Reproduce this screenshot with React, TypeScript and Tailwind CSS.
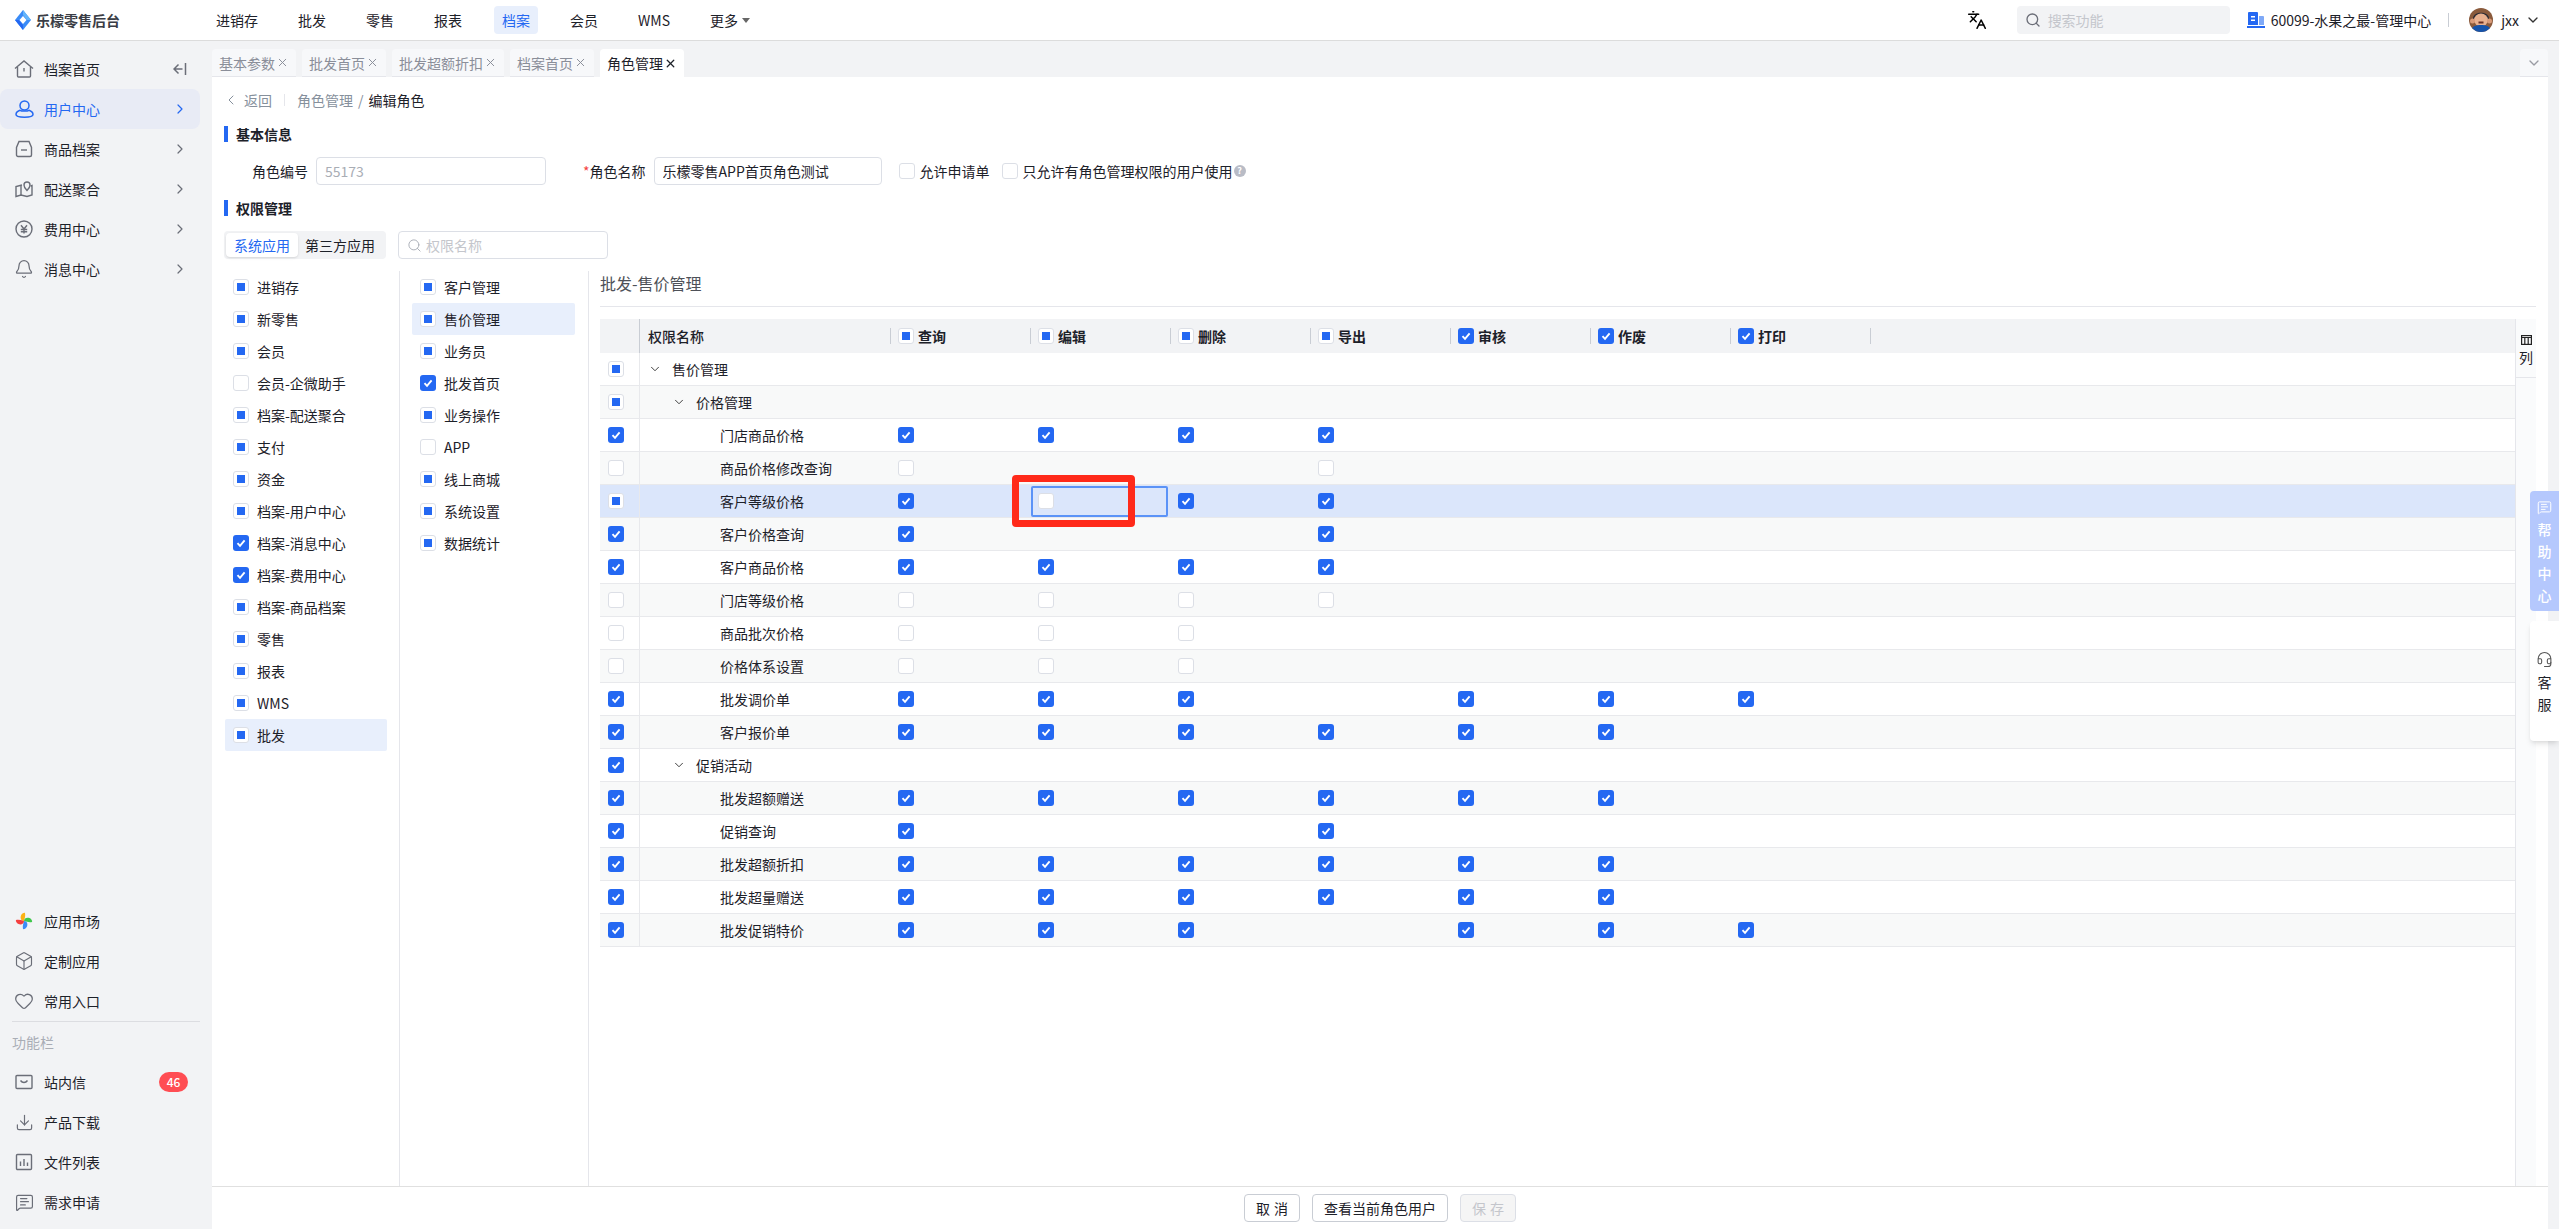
import { Bell, Box, ChevronDown, ChevronLeft, ChevronRight, Download, Heart, Headset, Languages, MessageSquareText, Search, X } from 'lucide-react';
import type { ReactNode } from 'react';

type Mark = 'c' | 'u' | 'i' | 'n' | 'f';

const navItems = ['进销存', '批发', '零售', '报表', '档案', '会员', 'WMS'];
const tabs = ['基本参数', '批发首页', '批发超额折扣', '档案首页', '角色管理'];

const appList: [string, Mark][] = [
  ['进销存', 'i'],
  ['新零售', 'i'],
  ['会员', 'i'],
  ['会员-企微助手', 'u'],
  ['档案-配送聚合', 'i'],
  ['支付', 'i'],
  ['资金', 'i'],
  ['档案-用户中心', 'i'],
  ['档案-消息中心', 'c'],
  ['档案-费用中心', 'c'],
  ['档案-商品档案', 'i'],
  ['零售', 'i'],
  ['报表', 'i'],
  ['WMS', 'i'],
  ['批发', 'i'],
];

const moduleList: [string, Mark][] = [
  ['客户管理', 'i'],
  ['售价管理', 'i'],
  ['业务员', 'i'],
  ['批发首页', 'c'],
  ['业务操作', 'i'],
  ['APP', 'u'],
  ['线上商城', 'i'],
  ['系统设置', 'i'],
  ['数据统计', 'i'],
];

const headCols: [string, Mark][] = [
  ['查询', 'i'],
  ['编辑', 'i'],
  ['删除', 'i'],
  ['导出', 'i'],
  ['审核', 'c'],
  ['作废', 'c'],
  ['打印', 'c'],
];

// level 0/1 rows are tree nodes with a chevron, level 2 are leaves
const rows: { name: string; level: number; left: Mark; cells: Mark[] }[] = [
  { name: '售价管理', level: 0, left: 'i', cells: [] },
  { name: '价格管理', level: 1, left: 'i', cells: [] },
  { name: '门店商品价格', level: 2, left: 'c', cells: ['c', 'c', 'c', 'c'] },
  { name: '商品价格修改查询', level: 2, left: 'u', cells: ['u', 'n', 'n', 'u'] },
  { name: '客户等级价格', level: 2, left: 'i', cells: ['c', 'f', 'c', 'c'] },
  { name: '客户价格查询', level: 2, left: 'c', cells: ['c', 'n', 'n', 'c'] },
  { name: '客户商品价格', level: 2, left: 'c', cells: ['c', 'c', 'c', 'c'] },
  { name: '门店等级价格', level: 2, left: 'u', cells: ['u', 'u', 'u', 'u'] },
  { name: '商品批次价格', level: 2, left: 'u', cells: ['u', 'u', 'u', 'n'] },
  { name: '价格体系设置', level: 2, left: 'u', cells: ['u', 'u', 'u', 'n'] },
  { name: '批发调价单', level: 2, left: 'c', cells: ['c', 'c', 'c', 'n', 'c', 'c', 'c'] },
  { name: '客户报价单', level: 2, left: 'c', cells: ['c', 'c', 'c', 'c', 'c', 'c', 'n'] },
  { name: '促销活动', level: 1, left: 'c', cells: [] },
  { name: '批发超额赠送', level: 2, left: 'c', cells: ['c', 'c', 'c', 'c', 'c', 'c', 'n'] },
  { name: '促销查询', level: 2, left: 'c', cells: ['c', 'n', 'n', 'c', 'n', 'n', 'n'] },
  { name: '批发超额折扣', level: 2, left: 'c', cells: ['c', 'c', 'c', 'c', 'c', 'c', 'n'] },
  { name: '批发超量赠送', level: 2, left: 'c', cells: ['c', 'c', 'c', 'c', 'c', 'c', 'n'] },
  { name: '批发促销特价', level: 2, left: 'c', cells: ['c', 'c', 'c', 'n', 'c', 'c', 'c'] },
];

function Check({ mark }: { mark: Mark }) {
  if (mark === 'n') return null;
  if (mark === 'c') {
    return (
      <span className="w-4 h-4 rounded-[3px] bg-[#2468f2] flex items-center justify-center shrink-0">
        <svg width="12" height="12" viewBox="0 0 12 12" fill="none">
          <path d="M2.500 6.200 5 8.800 9.600 3.400" stroke="#fff" strokeWidth="1.900" />
        </svg>
      </span>
    );
  }
  return (
    <span className="w-4 h-4 rounded-[3px] bg-white border border-[#dcdfe6] flex items-center justify-center shrink-0">
      {mark === 'i' && <span className="w-2 h-2 bg-[#2468f2]" />}
    </span>
  );
}

function Logo() {
  return (
    <svg width="16" height="20" viewBox="0 0 16 20">
      <path d="M8 0 16 10 8 20 0 10Z" fill="#3a8bf7" />
      <path d="M8 0 16 10 12 10 8 5Z" fill="#62b4fb" />
      <path d="M8 20 0 10 4 10 8 15Z" fill="#2468f2" />
      <path d="M8 6 11.500 10 8 14 4.500 10Z" fill="#fff" />
    </svg>
  );
}

function HomeIcon() {
  return (
    <svg width="20" height="18" viewBox="0 0 20 18" fill="none" stroke="#6b6e78" strokeWidth="1.400">
      <path d="M1 8.500 10 1l9 7.500" />
      <path d="M3.500 7v9a1 1 0 0 0 1 1h11a1 1 0 0 0 1-1V7" />
      <path d="M10 8v3.500" />
    </svg>
  );
}

function UserIcon() {
  return (
    <svg width="19" height="18" viewBox="0 0 19 18" fill="none" stroke="#2468f2" strokeWidth="1.500">
      <circle cx="9.500" cy="5.500" r="4.500" />
      <path d="M1 14.500c0-2.200 2-3.500 4-4.200 1.500 1 7.500 1 9 0 2 .7 4 2 4 4.200 0 1.800-3.500 2.700-8.500 2.700S1 16.300 1 14.500Z" />
    </svg>
  );
}

function TrayIcon() {
  return (
    <svg width="18" height="18" viewBox="0 0 18 18" fill="none" stroke="#6b6e78" strokeWidth="1.400">
      <path d="M4 1.500h10l2.500 6V15a1.500 1.500 0 0 1-1.500 1.500H3A1.500 1.500 0 0 1 1.500 15V7.500Z" />
      <path d="M6 10h6" />
    </svg>
  );
}

function MapIcon() {
  return (
    <svg width="18" height="18" viewBox="0 0 18 18" fill="none" stroke="#6b6e78" strokeWidth="1.400">
      <path d="M7 5 1 6.500v10L6 15l6 1.500 5-1.500V5.500L15.500 6" />
      <path d="M6 6v9" />
      <path d="M12 10.500s-3-2.800-3-5.500a3 3 0 0 1 6 0c0 2.700-3 5.500-3 5.500Z" />
    </svg>
  );
}

function YuanIcon() {
  return (
    <svg width="18" height="18" viewBox="0 0 18 18" fill="none" stroke="#6b6e78" strokeWidth="1.400">
      <circle cx="9" cy="9" r="8" />
      <path d="M6 5.200 9 9l3-3.800M5.800 9.500h6.400M5.800 11.800h6.400M9 9v4.600" />
    </svg>
  );
}

function MarketIcon() {
  return (
    <svg width="18" height="18" viewBox="0 0 18 18">
      <path d="M9 9C6 9 5 6 6 3.500 6.800 1.500 9 .5 10 1 10.500 3.500 10 6 9 9Z" fill="#fbb214" />
      <path d="M9 9c0-3 3-4 5.500-3C16.500 6.800 17.500 9 17 10 14.500 10.500 12 10 9 9Z" fill="#3fc74b" />
      <path d="M9 9c3 0 4 3 3 5.500-.8 2-3 3-4 2.500C7.500 14.500 8 12 9 9Z" fill="#3c8cf8" />
      <path d="M9 9c0 3-3 4-5.500 3C1.500 11.200.5 9 1 8 3.500 7.500 6 8 9 9Z" fill="#f53f3f" />
    </svg>
  );
}

function MailIcon() {
  return (
    <svg width="18" height="18" viewBox="0 0 18 18" fill="none" stroke="#6b6e78" strokeWidth="1.400">
      <rect x="1" y="2.500" width="16" height="13" rx="1" />
      <path d="M5.500 7.500c1 1.400 2.200 2 3.500 2s2.500-.6 3.500-2" />
    </svg>
  );
}

function ChartIcon() {
  return (
    <svg width="18" height="18" viewBox="0 0 18 18" fill="none" stroke="#6b6e78" strokeWidth="1.400">
      <rect x="1.500" y="1.500" width="15" height="15" rx="1" />
      <path d="M5.500 8.500v4.500M9 6v7M12.500 9.500v3.500" />
    </svg>
  );
}

function OrgIcon() {
  return (
    <svg width="18" height="16" viewBox="0 0 18 16">
      <path d="M1 1a1 1 0 0 1 1-1h8a1 1 0 0 1 1 1v12H1Z" fill="#2468f2" />
      <path d="M12 4h4a1 1 0 0 1 1 1v8h-5Z" fill="#7fa9f7" />
      <rect y="14" width="18" height="2" fill="#2468f2" />
      <path d="M4 4h4v1.500H4ZM4 7.500h4V9H4Z" fill="#fff" />
    </svg>
  );
}

function Avatar() {
  return (
    <svg width="24" height="24" viewBox="0 0 24 24" className="rounded-full shrink-0">
      <rect width="24" height="24" fill="#8a5a3c" />
      <path d="M4 10C5 3 19 3 20 10v2H4Z" fill="#2a2a33" />
      <ellipse cx="12" cy="12" rx="7" ry="6.500" fill="#e8b08f" />
      <circle cx="3.500" cy="13" r="2.500" fill="#d99a78" />
      <circle cx="20.500" cy="13" r="2.500" fill="#d99a78" />
      <path d="M9.500 13.500h5v2h-5Z" fill="#6a2e22" />
      <path d="M2 24c0-6 5-7 10-7s10 1 10 7Z" fill="#1553ab" />
    </svg>
  );
}

function SideItem({ icon, label, open, active, badge }: { icon: ReactNode; label: string; open?: boolean; active?: boolean; badge?: string }) {
  return (
    <div className={active ? 'h-10 w-[200px] rounded-lg bg-[#e8ebf5] flex items-center text-[#2468f2]' : 'h-10 w-[200px] flex items-center'}>
      <span className="w-[24px] ml-3 flex items-center justify-center">{icon}</span>
      <span className="ml-2">{label}</span>
      {open && <ChevronRight size={16} strokeWidth={1.800} className={active ? 'ml-auto mr-3 text-[#2468f2]' : 'ml-auto mr-3 text-[#6b6e78]'} />}
      {badge && <span className="ml-auto mr-3 w-[29px] h-5 rounded-full bg-[#ff4d53] text-white text-xs font-medium flex items-center justify-center">{badge}</span>}
    </div>
  );
}

function SectionTitle({ children, className }: { children: ReactNode; className: string }) {
  return <div className={`h-4 border-l-4 border-[#2468f2] pl-2 flex items-center font-bold ${className}`}>{children}</div>;
}

function ListRow({ label, mark, active, className }: { label: string; mark: Mark; active?: boolean; className: string }) {
  return (
    <div className={`h-8 flex items-center gap-2 pl-2 rounded-[2px] ${className} ${active ? 'bg-[#e8effc]' : ''}`}>
      <Check mark={mark} />
      <span>{label}</span>
    </div>
  );
}

export default function App() {
  return (
    <div className="relative h-[1229px] w-[2559px] overflow-hidden flex flex-col bg-[#f2f3f5] text-[#1d2129] text-sm font-['Noto_Sans_CJK_SC','Noto_Sans',sans-serif]">
      {/* Top bar */}
      <header className="h-[41px] shrink-0 bg-white border-b border-[#dcdcdc] flex items-center">
        <div className="w-[208px] pl-[15px] flex items-center gap-[5px]">
          <Logo />
          <span className="font-bold text-[#3a3d45]">乐檬零售后台</span>
        </div>
        <nav className="flex items-center gap-6">
          {navItems.map((item) => (
            <span key={item} className={item === '档案' ? 'h-7 px-2 flex items-center rounded bg-[#e8effc] text-[#2468f2]' : 'h-7 px-2 flex items-center'}>
              {item}
            </span>
          ))}
          <span className="h-7 px-2 flex items-center gap-1">
            更多
            <span className="w-0 h-0 border-x-[4px] border-x-transparent border-t-[5px] border-t-[#666]" />
          </span>
        </nav>
        <div className="ml-auto flex items-center">
          <Languages size={20} strokeWidth={1.800} className="text-black" />
          <div className="ml-[30px] w-[213px] h-7 rounded bg-[#f2f3f5] flex items-center pl-2 gap-[7px] text-[#c4c6cc]">
            <Search size={16} className="text-[#6b6e78]" />
            搜索功能
          </div>
          <span className="ml-[17px]"><OrgIcon /></span>
          <span className="ml-1.5">60099-水果之最-管理中心</span>
          <span className="ml-[17px] w-px h-3.5 bg-[#c9cdd4]" />
          <span className="ml-[20px]"><Avatar /></span>
          <span className="ml-2">jxx</span>
          <ChevronDown size={16} strokeWidth={2} className="ml-[6px] mr-[18px] text-[#333]" />
        </div>
      </header>

      <div className="flex-1 min-h-0 flex">
        {/* Sidebar */}
        <aside className="w-[212px] shrink-0 flex flex-col pt-2">
          <div className="relative">
            <SideItem icon={<HomeIcon />} label="档案首页" />
            <svg width="14" height="12" viewBox="0 0 14 12" fill="none" stroke="#6b6e78" strokeWidth="1.500" className="absolute left-[173px] top-[14px]">
              <path d="M12.500 0v12M9.500 6H1M5.500 1.500 1 6l4.500 4.500" />
            </svg>
          </div>
          <SideItem active open icon={<UserIcon />} label="用户中心" />
          <SideItem open icon={<TrayIcon />} label="商品档案" />
          <SideItem open icon={<MapIcon />} label="配送聚合" />
          <SideItem open icon={<YuanIcon />} label="费用中心" />
          <SideItem open icon={<Bell size={20} strokeWidth={1.500} className="text-[#6b6e78]" />} label="消息中心" />

          <div className="mt-auto pb-[7px]">
            <SideItem icon={<MarketIcon />} label="应用市场" />
            <SideItem icon={<Box size={20} strokeWidth={1.400} className="text-[#6b6e78]" />} label="定制应用" />
            <SideItem icon={<Heart size={20} strokeWidth={1.500} className="text-[#6b6e78]" />} label="常用入口" />
            <div className="ml-3 w-[188px] h-px bg-[#dcdde1]" />
            <div className="ml-3 h-10 flex items-center text-[#a9adb5]">功能栏</div>
            <SideItem icon={<MailIcon />} label="站内信" badge="46" />
            <SideItem icon={<Download size={19} strokeWidth={1.500} className="text-[#6b6e78]" />} label="产品下载" />
            <SideItem icon={<ChartIcon />} label="文件列表" />
            <SideItem icon={<MessageSquareText size={19} strokeWidth={1.500} className="text-[#6b6e78]" />} label="需求申请" />
          </div>
        </aside>

        <main className="flex-1 min-w-0 flex flex-col">
          {/* Tabs */}
          <div className="h-[36px] shrink-0 pt-2 flex gap-[6px]">
            {tabs.map((tab) => (
              <div
                key={tab}
                className={
                  tab === '角色管理'
                    ? 'h-7 px-[7px] rounded-t flex items-center gap-px bg-white'
                    : 'h-7 px-[7px] rounded-t flex items-center gap-px bg-[#f7f8fa] border-b border-[#e5e6eb] text-[#8a8e99]'
                }
              >
                {tab}
                <X size={13} strokeWidth={tab === '角色管理' ? 2.400 : 1.800} />
              </div>
            ))}
            <div className="ml-auto mr-[11px] w-7 h-7 rounded-t bg-[#f7f8fa] border-b border-[#e5e6eb] flex items-center justify-center text-[#9a9ca3]">
              <ChevronDown size={16} />
            </div>
          </div>

          {/* Page body */}
          <div className="flex-1 min-h-0 mr-[11px] bg-white pl-3 pr-3 flex flex-col">
            <div className="h-[46px] shrink-0 flex items-center text-[#86909c]">
              <ChevronLeft size={16} strokeWidth={1.500} className="ml-[-1px]" />
              <span className="ml-[5px]">返回</span>
              <span className="ml-3 w-px h-3 bg-[#e5e6eb]" />
              <span className="ml-3">角色管理</span>
              <span className="mx-[5px]">/</span>
              <span className="text-[#1d2129]">编辑角色</span>
            </div>

            <SectionTitle className="mt-[3px]">基本信息</SectionTitle>

            <div className="mt-[15px] h-7 flex items-center">
              <span className="ml-7 w-[57px]">角色编号</span>
              <input readOnly defaultValue="55173" className="ml-[7px] w-[230px] h-7 px-2 rounded border border-[#dcdfe6] text-[#a9adb5] outline-none" />
              <span className="ml-[37px]"><span className="text-[#f53f3f]">*</span>角色名称</span>
              <input readOnly defaultValue="乐檬零售APP首页角色测试" className="ml-2 w-[228px] h-7 px-2 rounded border border-[#dcdfe6] outline-none" />
              <span className="ml-[17px]"><Check mark="u" /></span>
              <span className="ml-[5px]">允许申请单</span>
              <span className="ml-3"><Check mark="u" /></span>
              <span className="ml-[5px]">只允许有角色管理权限的用户使用</span>
              <span className="ml-px w-3 h-3 rounded-full bg-[#b9bcc6] text-white text-[9px] font-bold flex items-center justify-center">?</span>
            </div>

            <SectionTitle className="mt-[15px]">权限管理</SectionTitle>

            <div className="mt-[15px] h-7 shrink-0 flex items-center">
              <div className="w-[162px] h-7 bg-[#f2f3f5] rounded flex items-center pl-0.5">
                <span className="w-[72px] h-6 rounded bg-white shadow-sm text-[#2468f2] flex items-center justify-center">系统应用</span>
                <span className="ml-[7px]">第三方应用</span>
              </div>
              <div className="ml-3 w-[210px] h-7 rounded border border-[#dcdfe6] flex items-center pl-2 gap-1 text-[#c4c6cc]">
                <Search size={15} strokeWidth={1.500} className="text-[#a9adb5]" />
                权限名称
              </div>
            </div>

            <div className="mt-3 flex-1 min-h-0 flex">
              <div className="w-[176px] shrink-0 border-r border-[#e5e6eb] pl-px">
                {appList.map(([label, mark]) => (
                  <ListRow key={label} label={label} mark={mark} active={label === '批发'} className="w-[162px]" />
                ))}
              </div>
              <div className="w-[189px] shrink-0 border-r border-[#e5e6eb] pl-3">
                {moduleList.map(([label, mark]) => (
                  <ListRow key={label} label={label} mark={mark} active={label === '售价管理'} className="w-[163px]" />
                ))}
              </div>

              {/* Permission table */}
              <div className="flex-1 min-w-0 pl-[11px] flex flex-col">
                <div className="h-9 shrink-0 pb-3 border-b border-[#e5e6eb] text-base text-[#4e5158] flex items-center">批发-售价管理</div>
                <div className="mt-3 flex-1 min-h-0 flex">
                  <div className="flex-1 min-w-0">
                    <div className="h-[34px] bg-[#f2f3f5] grid grid-cols-[40px_250px_repeat(7,140px)_1fr] items-center font-medium">
                      <span className="h-full border-r border-[#c9cdd4]" />
                      <span className="pl-2">权限名称</span>
                      {headCols.map(([label, mark]) => (
                        <span key={label} className="flex items-center">
                          <span className="w-px h-4 bg-[#c9cdd4] mr-[7px]" />
                          <Check mark={mark} />
                          <span className="ml-1 font-bold">{label}</span>
                        </span>
                      ))}
                      <span className="w-px h-4 bg-[#c9cdd4]" />
                    </div>
                    {rows.map((row, i) => (
                      <div
                        key={row.name}
                        className={`h-[33px] border-b border-[#e8e9ec] grid grid-cols-[40px_250px_repeat(7,140px)_1fr] items-center ${
                          i === 4 ? 'bg-[#dbe6fb]' : i % 2 === 1 ? 'bg-[#f8f9f9]' : 'bg-white'
                        }`}
                      >
                        <span className="h-full border-r border-[#e8e9ec] flex items-center pl-2">
                          <Check mark={row.left} />
                        </span>
                        {row.level === 2 ? (
                          <span className="pl-20">{row.name}</span>
                        ) : (
                          <span className={row.level === 0 ? 'pl-2 flex items-center gap-[10px]' : 'pl-8 flex items-center gap-[10px]'}>
                            <ChevronDown size={14} strokeWidth={1.600} className="text-[#333]" />
                            {row.name}
                          </span>
                        )}
                        {row.cells.map((mark, c) =>
                          mark === 'f' ? (
                            <span key={c} className="ml-px w-[137px] h-[31px] pl-[5px] border-2 border-[#5b93f7] rounded-[2px] flex items-center">
                              <Check mark="u" />
                            </span>
                          ) : (
                            <span key={c} className="pl-2 flex items-center">
                              <Check mark={mark} />
                            </span>
                          ),
                        )}
                      </div>
                    ))}
                  </div>
                  {/* Column settings strip */}
                  <div className="w-[21px] shrink-0 bg-[#fafbfc] border-l border-[#e5e6eb]">
                    <div className="h-[59px] border-b border-[#e5e6eb] flex flex-col items-center pt-4">
                      <svg width="11" height="10" viewBox="0 0 11 10" fill="none" stroke="#222" strokeWidth="1.200">
                        <rect x=".6" y=".6" width="9.800" height="8.800" />
                        <path d="M0 2.500h11M3.800 2.500v7M7.200 2.500v7" />
                      </svg>
                      <span className="mt-[3px] text-sm leading-[18px]">列</span>
                    </div>
                  </div>
                </div>
              </div>
            </div>
          </div>

          {/* Footer actions */}
          <div className="h-[43px] shrink-0 mr-[11px] bg-white border-t border-[#e0e0e0] flex items-center justify-center gap-3">
            <button className="w-14 h-7 rounded border border-[#c9cdd4] tracking-[4px] pl-1">取消</button>
            <button className="w-[136px] h-7 rounded border border-[#c9cdd4]">查看当前角色用户</button>
            <button className="w-14 h-7 rounded border border-[#dcdfe6] bg-[#f5f5f5] text-[#c4c6cc] tracking-[4px] pl-1">保存</button>
          </div>
        </main>
      </div>

      {/* Annotation drawn over the focused cell */}
      <div className="absolute left-[1012px] top-[475px] w-[123px] h-[52px] border-[7px] border-[#ff2a1a] rounded-[4px]" />

      {/* Floating help buttons */}
      <div className="absolute right-0 top-[491px] w-[29px] h-[120px] rounded-l bg-[#b5c8fd] text-white font-medium flex flex-col items-center pt-[9px]">
        <MessageSquareText size={15} strokeWidth={1.600} />
        <span className="mt-[3px] leading-[22px]">帮</span>
        <span className="leading-[22px]">助</span>
        <span className="leading-[22px]">中</span>
        <span className="leading-[22px]">心</span>
      </div>
      <div className="absolute right-0 top-[621px] w-[29px] h-[120px] rounded-l bg-white shadow-md flex flex-col items-center pt-[30px]">
        <Headset size={17} strokeWidth={1.500} className="text-[#555]" />
        <span className="mt-[3px] leading-[22px]">客</span>
        <span className="leading-[22px]">服</span>
      </div>
    </div>
  );
}
